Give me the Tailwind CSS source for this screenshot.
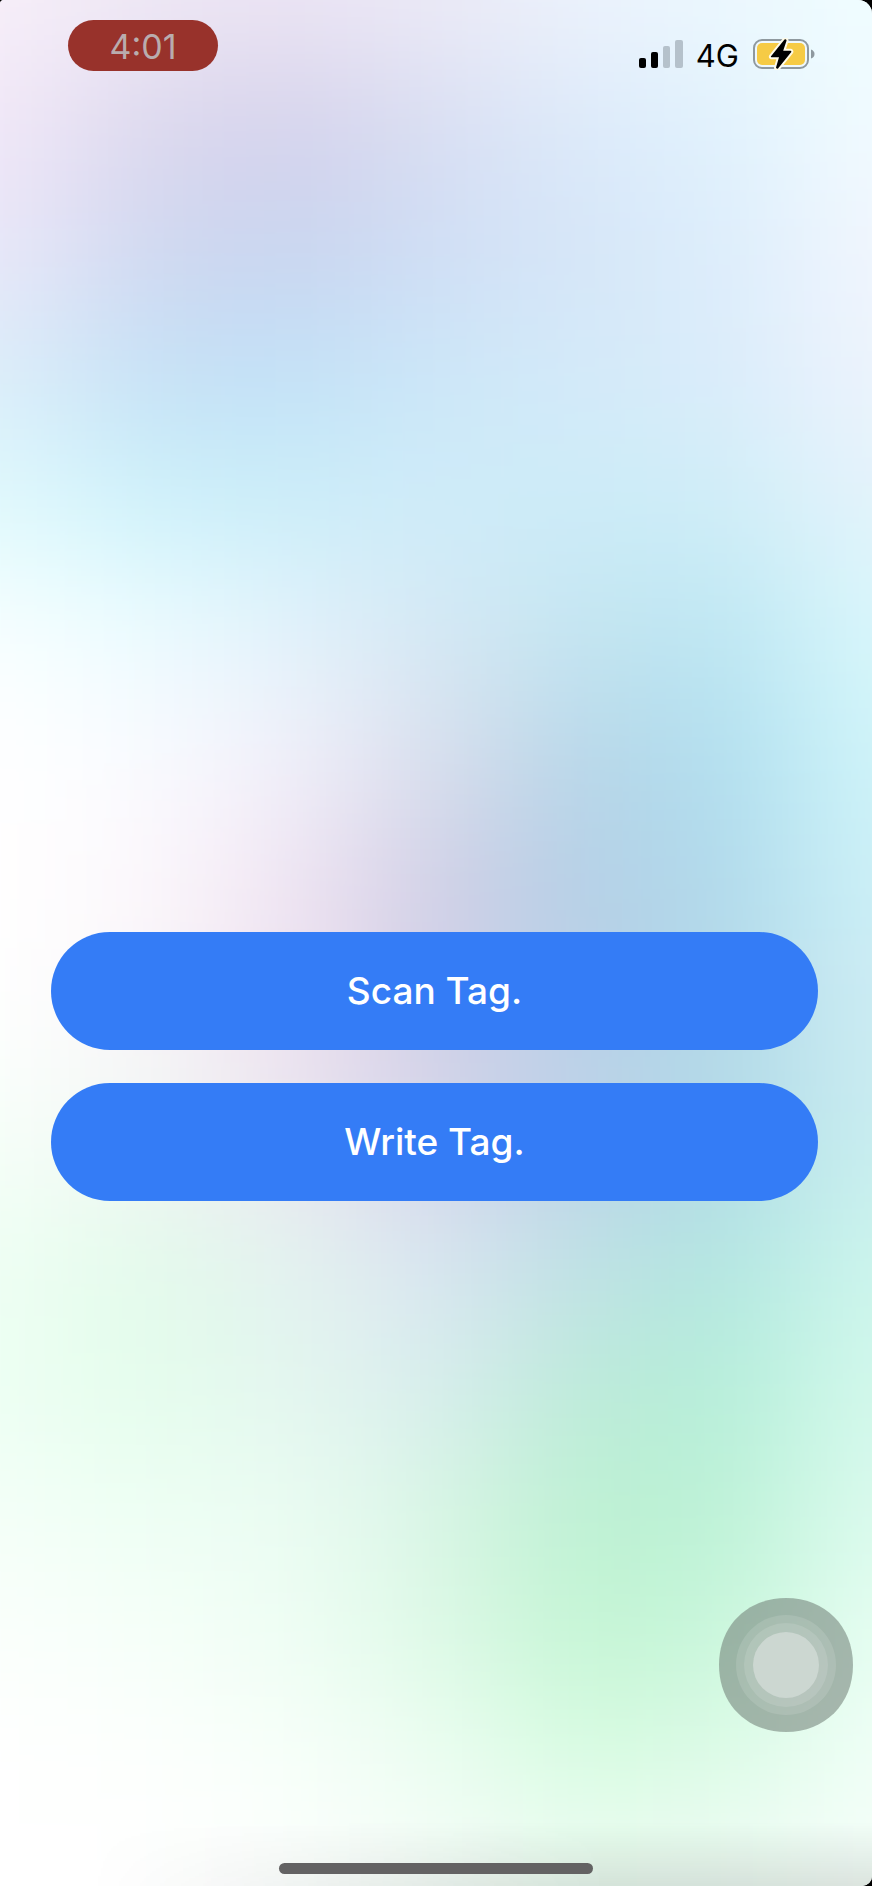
<!DOCTYPE html>
<html lang="en">
<head>
<meta charset="utf-8">
<meta name="viewport" content="width=device-width, initial-scale=1">
<title>Tag</title>
<script src="https://cdn.jsdelivr.net/npm/@tailwindcss/browser@4"></script>
</head>
<body class="bg-black font-['Inter','Liberation_Sans',sans-serif]">
<div class="relative isolate flex min-h-screen flex-col overflow-hidden rounded-tl-[4px] rounded-tr-[14px] rounded-br-[10px] bg-white">

  <!-- Mesh gradient backdrop -->
  <svg class="absolute inset-0 -z-10 h-full w-full" viewBox="0 0 600 1500" preserveAspectRatio="none" aria-hidden="true">
    <defs>
      <filter id="soften" filterUnits="userSpaceOnUse" x="-300" y="-300" width="1200" height="2100" color-interpolation-filters="sRGB">
        <feGaussianBlur stdDeviation="48"/>
      </filter>
    </defs>
    <g id="mesh" filter="url(#soften)"></g>
  </svg>
  <div class="absolute inset-x-0 bottom-0 -z-10 h-16 bg-linear-to-t from-black/10 to-transparent mask-l-from-30% mask-l-to-90%"></div>

  <header class="flex h-[90px] items-start justify-between pt-5 pr-[57px] pl-[68px]">
    <time class="flex h-[51px] w-[150px] items-center justify-center rounded-full bg-[#98322b] pt-[2px] text-[34px] leading-none text-[#b9acae]">4:01</time>
    <div class="flex h-[68px] items-center text-black">
      <svg class="h-7 w-11" viewBox="0 0 44 28" aria-label="Signal strength">
        <rect x="0" y="18" width="7" height="10" rx="2"/>
        <rect x="12" y="12" width="7" height="16" rx="2"/>
        <rect x="24" y="6" width="7" height="22" rx="2" fill="#b5c1cb"/>
        <rect x="36" y="0" width="8" height="28" rx="2" fill="#b5c1cb"/>
      </svg>
      <span class="ml-[13px] pt-[2px] text-[31px] leading-none">4G</span>
      <svg class="ml-[14px] h-8 w-[62px]" viewBox="0 0 62 32" aria-label="Battery charging">
        <rect x="1" y="2" width="54" height="28" rx="8" fill="#eef8fd" stroke="#8f999f" stroke-width="2"/>
        <rect x="4" y="5" width="48" height="22" rx="5" fill="#f6cb45"/>
        <path d="M58 11.500C60.500 12.500 61.500 14 61.500 16S60.500 19.500 58 20.500Z" fill="#8f999f"/>
        <path d="M31.500 1.500 18 18.200Q17.500 19.200 18.600 19.200H26L23 29.600Q23.300 31.200 25 30.500L38.300 14Q38.700 13 37.600 12.800H30.200L33.600 2.500Q33 .5 31.500 1.500Z" fill="#000" stroke="#fffbe8" stroke-width="4" stroke-linejoin="round" paint-order="stroke"/>
      </svg>
    </div>
  </header>

  <main class="flex flex-1 flex-col justify-center gap-[33px] pt-[191px] pr-[54px] pl-[51px]">
    <button type="button" class="h-[118px] w-full rounded-full bg-[#347cf6] text-[37px] font-medium text-white">Scan Tag.</button>
    <button type="button" class="h-[118px] w-full rounded-full bg-[#347cf6] text-[37px] font-medium text-white">Write Tag.</button>
  </main>

  <footer class="flex h-[34px] items-start justify-center pt-[11px]">
    <div class="h-[11px] w-[36%] rounded-full bg-[#636263]"></div>
  </footer>

  <!-- Floating assistive control -->
  <button type="button" aria-label="Assistive menu" class="absolute right-[19px] bottom-[154px] size-[134px]">
    <svg class="size-full" viewBox="0 0 134 134" aria-hidden="true">
      <path d="M67 0C106 0 134 28 134 67S106 134 67 134 0 106 0 67 28 0 67 0Z" fill="#6d7a73" fill-opacity=".54"/>
      <circle cx="67" cy="67" r="50" fill="#fff" fill-opacity=".12"/>
      <circle cx="67" cy="67" r="42" fill="#fff" fill-opacity=".12"/>
      <circle cx="67" cy="67" r="33" fill="#d0d9d5" fill-opacity=".85"/>
    </svg>
  </button>
</div>

<script>
  // Colour stops of the mesh, left to right, one line per row from top to bottom
  const rows = [
    "f8f0fa efe8f4 ece4f4 eceaf6 ecf2fc ecf8fe f0fdff",
    "f2e8f7 dcd8ee d5d1ea d9def2 dceafa e0f2fd f2fcff",
    "eae8f9 d0d8f0 c8d4ef d0def5 d6e6f8 dcedfb f2f6fe",
    "dceefa c5e1f6 c2e1f7 cce7f8 d4eaf9 daecfa eef4fd",
    "e0fafd cef2fa cbeef9 cfecf9 ccecf8 cfeef8 e4f3fb",
    "f8ffff ecfcff e2f2fb d5e8f4 c4e6f1 bce6f2 daf8fc",
    "ffffff f9fbff f2f0fa dadfed b7d6e8 b0dfef d1f5fa",
    "ffffff fdf8fc f0e4f2 d1cee5 b4cfe6 afdaeb cef2f8",
    "ffffff f7f6f8 efe1f0 d1cfe6 b9d0e9 b0d8e8 cfedf4",
    "f7fff9 f2f6f4 ece6ef d3d3e9 bbd1e8 afdae6 caeef1",
    "effff4 e2faea e4f2f0 dae4f1 bfe0e6 b1e5e1 cef6ee",
    "edfff3 e3fdeb e4f6ef d8edee bdead9 b4eed9 d4f9ed",
    "f4fff8 edfff3 ebfcf3 d9f5e5 bcf0d2 bbf1d6 dcfbef",
    "fbfffc f6fff9 effef4 def9e7 c3f5d3 c8f6db e8fef3",
    "ffffff fdfffd f8fffa edfef2 d8fce2 ddfbe7 f2fff8",
    "ffffff ffffff fcfefd f5fcf8 effdf4 f0fcf5 f6fefa"
  ].map(line => line.split(" "));
  const mesh = document.getElementById("mesh");
  // One extra ring of cells on each side keeps the blur opaque at the edges
  for (let r = -2; r < rows.length + 2; r++) {
    const row = rows[Math.min(Math.max(r, 0), rows.length - 1)];
    for (let c = -2; c < row.length + 2; c++) {
      const cell = document.createElementNS("http://www.w3.org/2000/svg", "rect");
      cell.setAttribute("x", c * 100 - 50);
      cell.setAttribute("y", r * 100 - 50);
      cell.setAttribute("width", 101);
      cell.setAttribute("height", 101);
      cell.setAttribute("fill", "#" + row[Math.min(Math.max(c, 0), row.length - 1)]);
      mesh.append(cell);
    }
  }
</script>
</body>
</html>
